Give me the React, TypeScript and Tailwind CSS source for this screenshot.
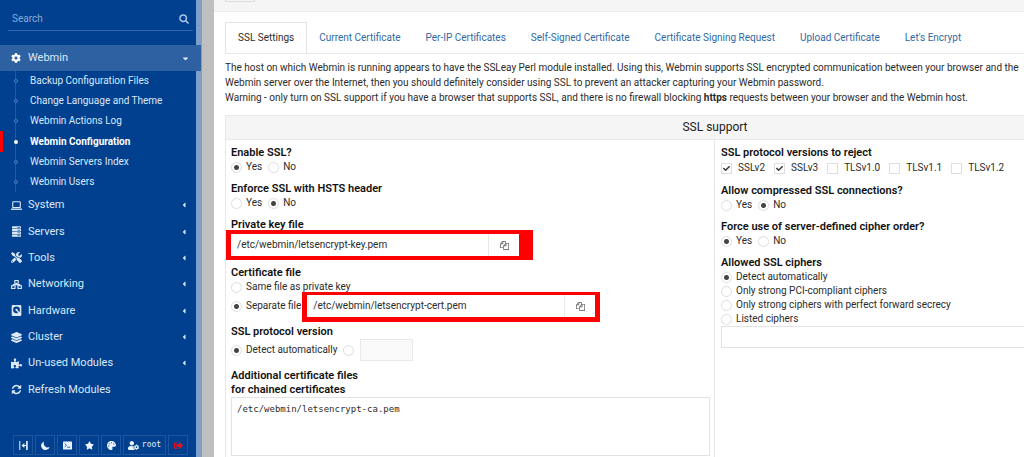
import React from 'react';
import {
  FaCog,
  FaCheck,
  FaCaretDown,
  FaCaretLeft,
  FaLayerGroup,
  FaPalette,
  FaPuzzlePiece,
  FaSignOutAlt,
  FaStar,
  FaTools,
  FaUserCog,
} from 'react-icons/fa';

interface IconProps {
  className?: string;
}

const SearchIcon = ({ className }: IconProps) => (
  <svg viewBox="0 0 16 16" className={className} fill="none" stroke="currentColor" strokeLinecap="round">
    <circle cx="6.7" cy="6.7" r="5.2" strokeWidth="2.4" />
    <path d="M10.8 10.8L14.4 14.4" strokeWidth="2.8" />
  </svg>
);

const LaptopIcon = ({ className }: IconProps) => (
  <svg viewBox="0 0 16 16" className={className} fill="none" stroke="currentColor">
    <rect x="2.5" y="2.5" width="11" height="8.5" rx="1" strokeWidth="1.6" />
    <path d="M0 13.4H16" strokeWidth="2" />
  </svg>
);

const ServersIcon = ({ className }: IconProps) => (
  <svg viewBox="0 0 16 16" className={className}>
    {[0.4, 4.4, 8.4, 12.4].map((y) => (
      <g key={y}>
        <rect x="1.5" y={y} width="13" height="3.2" rx="0.5" fill="currentColor" />
        <rect x="9.5" y={y + 1.1} width="3.5" height="1" fill="#00408f" />
      </g>
    ))}
  </svg>
);

const NetworkIcon = ({ className }: IconProps) => (
  <svg viewBox="0 0 18 16" className={className} fill="none" stroke="currentColor" strokeWidth="1.8">
    <rect x="6.2" y="1.5" width="5.6" height="4.5" />
    <rect x="1" y="10" width="5.6" height="4.5" />
    <rect x="11.4" y="10" width="5.6" height="4.5" />
    <path d="M9 6V8.2M3.8 10V8.2H14.2V10" />
  </svg>
);

const DriveIcon = ({ className }: IconProps) => (
  <svg viewBox="0 0 16 16" className={className}>
    <rect x="1" y="0" width="14" height="16" rx="1.5" fill="currentColor" />
    <circle cx="8" cy="7" r="5" fill="#00408f" />
    <circle cx="8" cy="7" r="1.6" fill="currentColor" />
    <path d="M8.5 7.5L12.5 13" stroke="currentColor" strokeWidth="2" />
  </svg>
);

const RefreshIcon = ({ className }: IconProps) => (
  <svg viewBox="0 0 1792 1792" className={className} fill="currentColor">
    <path d="M1639 1056q0 5-1 7-64 268-268 434.5t-478 166.5q-146 0-282.5-55t-243.5-157l-129 129q-19 19-45 19t-45-19-19-45v-448q0-26 19-45t45-19h448q26 0 45 19t19 45-19 45l-137 137q71 66 161 102t187 36q134 0 250-65t186-179q11-17 53-117 8-23 30-23h192q13 0 22.5 9.5t9.5 22.5zm25-800v448q0 26-19 45t-45 19h-448q-26 0-45-19t-19-45 19-45l138-138q-148-137-349-137-134 0-250 65t-186 179q-11 17-53 117-8 23-30 23h-199q-13 0-22.5-9.5t-9.5-22.5v-7q65-268 270-434.5t480-166.5q146 0 284 55.5t245 156.5l130-129q19-19 45-19t45 19 19 45z" />
  </svg>
);

const FilesIcon = ({ className }: IconProps) => (
  <svg viewBox="0 0 1792 1792" className={className} fill="currentColor">
    <path d="M1696 384q40 0 68 28t28 68v1216q0 40-28 68t-68 28h-960q-40 0-68-28t-28-68v-288h-544q-40 0-68-28t-28-68v-672q0-40 20-88t48-76l408-408q28-28 76-48t88-20h416q40 0 68 28t28 68v328q68-40 128-40h416zm-544 213l-299 299h299v-299zm-640-384l-299 299h299v-299zm196 647l316-316v-416h-384v416q0 40-28 68t-68 28h-416v640h512v-256q0-40 20-88t48-76zm956 804v-1152h-384v416q0 40-28 68t-68 28h-416v640h896z" />
  </svg>
);

const CollapseIcon = ({ className }: IconProps) => (
  <svg viewBox="0 0 16 16" className={className} fill="currentColor">
    <rect x="0.5" y="0" width="1.8" height="16" />
    <rect x="12.6" y="0" width="2.9" height="16" />
    <path d="M4.5 8L9.5 3.5V7H12.6V9H9.5V12.5Z" />
  </svg>
);

const MoonIcon = ({ className }: IconProps) => (
  <svg viewBox="0 0 16 16" className={className} fill="currentColor">
    <path d="M5.5 0.8A7.8 7.8 0 1 0 15.4 10.6A7.4 7.4 0 0 1 5.5 0.8Z" />
  </svg>
);

const TerminalIcon = ({ className }: IconProps) => (
  <svg viewBox="0 0 16 16" className={className}>
    <rect x="0" y="1" width="16" height="14" rx="1" fill="currentColor" />
    <path d="M3 4.5L6.2 7.5L3 10.5M7.5 11H12.5" fill="none" stroke="#00408f" strokeWidth="1.5" />
  </svg>
);

const subItems = [
  'Backup Configuration Files',
  'Change Language and Theme',
  'Webmin Actions Log',
  'Webmin Configuration',
  'Webmin Servers Index',
  'Webmin Users',
];

const sections = [
  { label: 'System', icon: LaptopIcon },
  { label: 'Servers', icon: ServersIcon },
  { label: 'Tools', icon: FaTools },
  { label: 'Networking', icon: NetworkIcon },
  { label: 'Hardware', icon: DriveIcon },
  { label: 'Cluster', icon: FaLayerGroup },
  { label: 'Un-used Modules', icon: FaPuzzlePiece },
  { label: 'Refresh Modules', icon: RefreshIcon, leaf: true },
];

const tools = [
  { label: 'Collapse menu', icon: CollapseIcon },
  { label: 'Night mode', icon: MoonIcon },
  { label: 'Terminal', icon: TerminalIcon },
  { label: 'Favorites', icon: FaStar },
  { label: 'Theme', icon: FaPalette },
];

const tabs = [
  'SSL Settings',
  'Current Certificate',
  'Per-IP Certificates',
  'Self-Signed Certificate',
  'Certificate Signing Request',
  'Upload Certificate',
  "Let's Encrypt",
];

const Sidebar = () => (
  <aside className="flex w-[202px] shrink-0 flex-col border-r-[6px] border-[#7f9fc9] bg-[#00408f] text-[#dbe8f8]">
    <div className="mr-[3px] ml-2 flex h-[31px] items-center border-b border-[#2f66ab] pt-2 pr-1 pl-1">
      <input
        type="text"
        aria-label="Search"
        placeholder="Search"
        className="min-w-0 flex-1 bg-transparent outline-none placeholder:text-[#86abd9]"
      />
      <SearchIcon className="size-[10px] text-[#a9c6ea]" />
    </div>

    <nav className="mt-[14px]">
      <a href="#webmin" className="-mr-[5px] flex h-[26px] items-center bg-[#2d61a2] pr-[11px] pl-[11px] text-[11px]">
        <FaCog className="size-[10px] text-white" />
        <span className="ml-[7px] flex-1">Webmin</span>
        <FaCaretDown className="size-[9px]" />
      </a>
      <ul className="relative grid h-[121px] auto-rows-fr">
        <li aria-hidden="true" className="absolute inset-y-0 left-[15px] w-px bg-[#24599f]"></li>
        {subItems.map((item) => {
          const active = item === 'Webmin Configuration';
          return (
            <li key={item} className="relative flex">
              {active && <span className="absolute inset-y-0 left-0 w-[3px] bg-[#ff0000]"></span>}
              <a
                href="#item"
                className={`flex flex-1 items-center pl-[14px] ${active ? 'font-bold text-white' : ''}`}
              >
                <span
                  className={`mr-3 size-[4px] rounded-full ${active ? 'bg-white' : 'border border-[#4f82c2] bg-[#00408f]'}`}
                ></span>
                {item}
              </a>
            </li>
          );
        })}
      </ul>
      <ul className="grid h-[211px] auto-rows-fr">
        {sections.map(({ label, icon: Icon, leaf }) => (
          <li key={label} className="flex">
            <a href="#section" className="flex flex-1 items-center pr-[8px] pl-[11px] text-[11px]">
              <Icon className="size-[11px]" />
              <span className="ml-[6px] flex-1">{label}</span>
              {!leaf && <FaCaretLeft className="size-[8px]" />}
            </a>
          </li>
        ))}
      </ul>
    </nav>

    <div className="mt-auto mb-[2px] flex gap-[2px] pl-[13px] text-[#eaf3ff]">
      {tools.map(({ label, icon: Icon }) => (
        <button
          key={label}
          aria-label={label}
          className="flex h-5 w-5 items-center justify-center border border-[#1f559c]"
        >
          <Icon className="size-[9px]" />
        </button>
      ))}
      <button className="flex h-5 w-[43px] items-center justify-center gap-[3px] border border-[#1f559c] font-['DejaVu_Sans_Mono',monospace] text-[8px]">
        <FaUserCog className="size-[11px]" />
        root
      </button>
      <button aria-label="Logout" className="flex h-5 w-5 items-center justify-center border border-[#1f559c]">
        <FaSignOutAlt className="size-[9px] text-[#f0101c]" />
      </button>
    </div>
  </aside>
);

interface ChoiceProps {
  name: string;
  label: string;
  checked?: boolean;
}

const Radio = ({ name, label, checked }: ChoiceProps) => (
  <label className="flex h-[14px] items-center gap-1">
    <input
      type="radio"
      name={name}
      aria-label={label || 'Other version'}
      defaultChecked={checked}
      className="size-[11px] appearance-none rounded-full border border-[#dedede] bg-white checked:bg-[radial-gradient(circle,#444_2px,transparent_3px)]"
    />
    {label}
  </label>
);

const Check = ({ name, label, checked }: ChoiceProps) => (
  <label className="relative flex items-center gap-[6px]">
    <input
      type="checkbox"
      name={name}
      defaultChecked={checked}
      className="size-[11px] appearance-none border border-[#dedede] bg-white"
    />
    {checked && <FaCheck className="pointer-events-none absolute left-[2px] size-[7px] text-[#333]" />}
    {label}
  </label>
);

const YesNo = ({ name, value }: { name: string; value: 'Yes' | 'No' }) => (
  <div className="flex gap-[6px]">
    <Radio name={name} label="Yes" checked={value === 'Yes'} />
    <Radio name={name} label="No" checked={value === 'No'} />
  </div>
);

const Field = ({ title, children }: { title: React.ReactNode; children: React.ReactNode }) => (
  <fieldset>
    <legend className="text-[11px] font-semibold text-[#111]">{title}</legend>
    {children}
  </fieldset>
);

// Path box with its file chooser button, ringed in red
const FileInput = ({ label, value, ring }: { label: string; value: string; ring: string }) => (
  <div className="relative w-[288px]">
    <div className={`absolute bg-[#ff0000] ${ring}`}></div>
    <div className="relative flex h-[22px] bg-white">
      <input type="text" aria-label={label} defaultValue={value} className="min-w-0 flex-1 px-[6px] outline-none" />
      <button aria-label="Choose file" className="flex w-[31px] items-center justify-center border-l border-[#e8e8e8]">
        <FilesIcon className="size-[9px] text-[#555]" />
      </button>
    </div>
  </div>
);

export default function App() {
  return (
    <div className="flex h-screen overflow-hidden bg-[#bfbfbf] font-[Roboto,sans-serif] text-[10px] leading-[14px] text-[#2b2b2b]">
      <Sidebar />

      <main className="ml-3 min-w-[1002px] flex-1 bg-white">
        <header className="h-3 border-b border-[#ececec] bg-[#f5f5f5] pl-[11px]">
          <button aria-label="Module index" className="block h-[2px] w-[30px] border-x border-b border-[#ddd]"></button>
        </header>

        <div className="px-[11px] pt-[10px]">
          <div className="flex border-b border-[#e8e8e8]">
            {tabs.map((tab, index) => (
              <a
                key={tab}
                href="#tab"
                className={`flex h-[31px] items-center px-3 whitespace-nowrap ${
                  index === 0
                    ? '-mb-px border border-b-0 border-[#e2e2e2] bg-white'
                    : 'border-r border-transparent text-[#2f69a6]'
                }`}
              >
                {tab}
              </a>
            ))}
          </div>

          <p className="mt-[6px] leading-[15px] whitespace-nowrap">
            The host on which Webmin is running appears to have the SSLeay Perl module installed. Using this, Webmin
            supports SSL encrypted communication between your browser and the
            <br />
            Webmin server over the Internet, then you should definitely consider using SSL to prevent an attacker
            capturing your Webmin password.
            <br />
            Warning - only turn on SSL support if you have a browser that supports SSL, and there is no firewall
            blocking <b>https</b> requests between your browser and the Webmin host.
          </p>

          <section className="mt-[10px] border border-[#e8e8e8]">
            <h2 className="flex h-6 items-center justify-center border-b border-[#e8e8e8] bg-[#f5f5f5] pb-[2px] text-[12px] text-[#222]">
              SSL support
            </h2>

            <div className="grid grid-cols-2">
              <div className="flex flex-col gap-2 border-r border-[#e8e8e8] py-[6px] pr-1 pl-[5px]">
                <Field title="Enable SSL?">
                  <YesNo name="ssl" value="Yes" />
                </Field>
                <Field title="Enforce SSL with HSTS header">
                  <YesNo name="hsts" value="No" />
                </Field>
                <Field title="Private key file">
                  <div className="my-[2px]">
                    <FileInput
                      label="Private key file"
                      value="/etc/webmin/letsencrypt-key.pem"
                      ring="-top-[4px] -bottom-[4px] -left-[5px] -right-[14px]"
                    />
                  </div>
                </Field>
                <Field title="Certificate file">
                  <Radio name="cert" label="Same file as private key" />
                  <div className="mt-[1px] flex items-center gap-[6px]">
                    <Radio name="cert" label="Separate file" checked />
                    <FileInput
                      label="Certificate file"
                      value="/etc/webmin/letsencrypt-cert.pem"
                      ring="-top-[3px] -bottom-[5px] -left-[5px] -right-[5px]"
                    />
                  </div>
                </Field>
                <Field title="SSL protocol version">
                  <div className="flex items-center gap-[6px]">
                    <Radio name="version" label="Detect automatically" checked />
                    <Radio name="version" label="" />
                    <input
                      type="text"
                      disabled
                      aria-label="SSL protocol version"
                      className="h-[22px] w-[53px] border border-[#e8e8e8] bg-[#f9f9f9]"
                    />
                  </div>
                </Field>
                <Field
                  title={
                    <>
                      Additional certificate files
                      <br />
                      for chained certificates
                    </>
                  }
                >
                  <textarea
                    aria-label="Additional certificate files"
                    defaultValue="/etc/webmin/letsencrypt-ca.pem"
                    className="block h-[59px] w-full resize-none border border-[#e2e2e2] px-[5px] py-1 font-['DejaVu_Sans_Mono',monospace] text-[9px] outline-none"
                  />
                </Field>
              </div>

              <div className="flex flex-col gap-2 py-[6px] pr-1 pl-[6px]">
                <Field title="SSL protocol versions to reject">
                  <div className="flex h-4 items-center gap-[9px]">
                    <Check name="reject" label="SSLv2" checked />
                    <Check name="reject" label="SSLv3" checked />
                    <Check name="reject" label="TLSv1.0" />
                    <Check name="reject" label="TLSv1.1" />
                    <Check name="reject" label="TLSv1.2" />
                  </div>
                </Field>
                <Field title="Allow compressed SSL connections?">
                  <YesNo name="compress" value="No" />
                </Field>
                <Field title="Force use of server-defined cipher order?">
                  <YesNo name="order" value="Yes" />
                </Field>
                <Field title="Allowed SSL ciphers">
                  <Radio name="ciphers" label="Detect automatically" checked />
                  <Radio name="ciphers" label="Only strong PCI-compliant ciphers" />
                  <Radio name="ciphers" label="Only strong ciphers with perfect forward secrecy" />
                  <Radio name="ciphers" label="Listed ciphers" />
                  <input
                    type="text"
                    aria-label="Listed ciphers"
                    className="block h-[22px] w-full border border-[#e2e2e2] px-[5px] outline-none"
                  />
                </Field>
              </div>
            </div>
          </section>
        </div>
      </main>
    </div>
  );
}
